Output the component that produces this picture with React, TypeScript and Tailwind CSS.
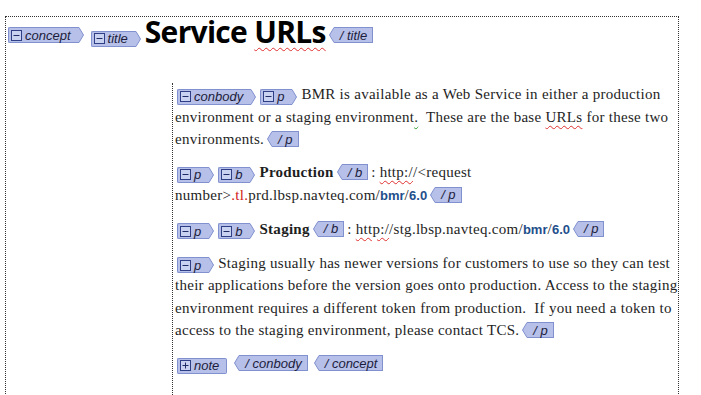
import React from "react";

const fill = "#b6c0e8";
const edge = "#8190cf";

function Box({ plus }: { plus?: boolean }) {
  return (
    <svg width="11" height="11" viewBox="0 0 11 11" className="shrink-0">
      <rect x="0.5" y="0.5" width="10" height="10" fill="#cad2f2" stroke="#2f3f86" />
      <line x1="2.5" y1="5.5" x2="8.5" y2="5.5" stroke="#1f2c66" />
      {plus && <line x1="5.5" y1="2.5" x2="5.5" y2="8.5" stroke="#1f2c66" />}
    </svg>
  );
}

function Open({ name, plus, arrow = true }: { name: string; plus?: boolean; arrow?: boolean }) {
  return (
    <span className="inline-flex h-[16px] align-[-3px] items-stretch leading-none mr-[4px]">
      <span className="flex items-center gap-[3px] pl-[2px] pr-[5px] bg-[#b6c0e8] border border-r-0 border-[#8190cf] rounded-l-[2px] font-['Liberation_Sans',sans-serif] italic text-[13px] text-[#1c1c3c] tracking-normal">
        <Box plus={plus} />
        {name}
      </span>
      {arrow ? (
        <svg width="8" height="16" viewBox="0 0 8 16">
          <path d="M0 0.5 H3 L7.5 8 L3 15.5 H0 Z" fill={fill} />
          <path d="M0 0.5 H3 L7.5 8 L3 15.5 H0" fill="none" stroke={edge} />
        </svg>
      ) : (
        <span className="w-[3px] bg-[#b6c0e8] border border-l-0 border-[#8190cf] rounded-r-[2px]" />
      )}
    </span>
  );
}

function Close({ name }: { name: string }) {
  return (
    <span className="inline-flex h-[16px] align-[-3px] items-stretch leading-none ml-[3px] mr-[3px]">
      <svg width="8" height="16" viewBox="0 0 8 16">
        <path d="M8 0.5 H5 L0.5 8 L5 15.5 H8 Z" fill={fill} />
        <path d="M8 0.5 H5 L0.5 8 L5 15.5 H8" fill="none" stroke={edge} />
      </svg>
      <span className="flex items-center pl-[3px] pr-[5px] bg-[#b6c0e8] border border-l-0 border-[#8190cf] font-['Liberation_Sans',sans-serif] italic text-[13px] text-[#1c1c3c] tracking-normal whitespace-pre">
        {name}
      </span>
    </span>
  );
}

const red = "underline decoration-wavy decoration-[#e03030] decoration-1 underline-offset-[3px]";
const green = "underline decoration-wavy decoration-[#2a9a2a] decoration-1 underline-offset-[3px]";
const url = "font-['Liberation_Sans',sans-serif] font-bold text-[13px] text-[#1f4f8c] tracking-normal";

export default function App() {
  return (
    <div className="w-[701px] h-[395px] bg-white overflow-hidden">
      <div className="ml-[5px] mt-[16px] w-[674px] h-[400px] border-l border-t border-r border-dotted border-[#333]">
        <div className="flex items-center h-[34px] pl-[2px] pt-[2px]">
          <Open name="concept" />
          <span className="ml-[3px]"><Open name="title" /></span>
          <span className="-mt-[7px] font-['Open_Sans',sans-serif] font-bold text-[30px] tracking-[-0.7px] text-black leading-none">
            Service <span className={"underline decoration-wavy decoration-[#e03030] decoration-1 underline-offset-[4px]"}>URLs</span>
          </span>
          <Close name="/ title" />
        </div>

        <div className="ml-[166px] mt-[32px] border-l border-dotted border-[#333] pl-[2px] h-[330px] font-['Liberation_Serif',serif] text-[15px] leading-[22.5px] tracking-[0.28px] text-[#1e1e1e] whitespace-nowrap">
          <p>
            <span className="ml-[2px]"><Open name="conbody" /></span>
            <Open name="p" />
            BMR is available as a Web Service in either a production
            <br />
            environment or a staging environment<span className={green}>.</span>&nbsp; These are the base{" "}
            <span className={red}>URLs</span> for these two
            <br />
            environments.
            <Close name="/ p" />
          </p>

          <p className="mt-[10.5px]">
            <span className="ml-[2px]"><Open name="p" /></span>
            <Open name="b" />
            <b>Production</b>
            <Close name="/ b" />: <span className={red}>http:/</span>/&lt;request
            <br />
            number&gt;<span className="text-[#d01818]">.tl.</span>prd.lbsp.navteq.com/<span className={url}>bmr</span>/
            <span className={url}>6.0</span>
            <Close name="/ p" />
          </p>

          <p className="mt-[10.5px]">
            <span className="ml-[2px]"><Open name="p" /></span>
            <Open name="b" />
            <b>Staging</b>
            <Close name="/ b" />: <span className={red}>http:/</span>/stg.lbsp.navteq.com/<span className={url}>bmr</span>/
            <span className={url}>6.0</span>
            <Close name="/ p" />
          </p>

          <p className="mt-[10.5px]">
            <span className="ml-[2px]"><Open name="p" /></span>
            Staging usually has newer versions for customers to use so they can test
            <br />
            their applications before the version goes onto production. Access to the staging
            <br />
            environment requires a different token from production.&nbsp; If you need a token to
            <br />
            access to the staging environment, please contact TCS.
            <Close name="/ p" />
          </p>

          <div className="mt-[10.5px] flex items-center h-[22.5px]">
            <span className="ml-[2px]"><Open name="note" plus arrow={false} /></span>
            <Close name="/ conbody" />
            <Close name="/ concept" />
          </div>
        </div>
      </div>
    </div>
  );
}
